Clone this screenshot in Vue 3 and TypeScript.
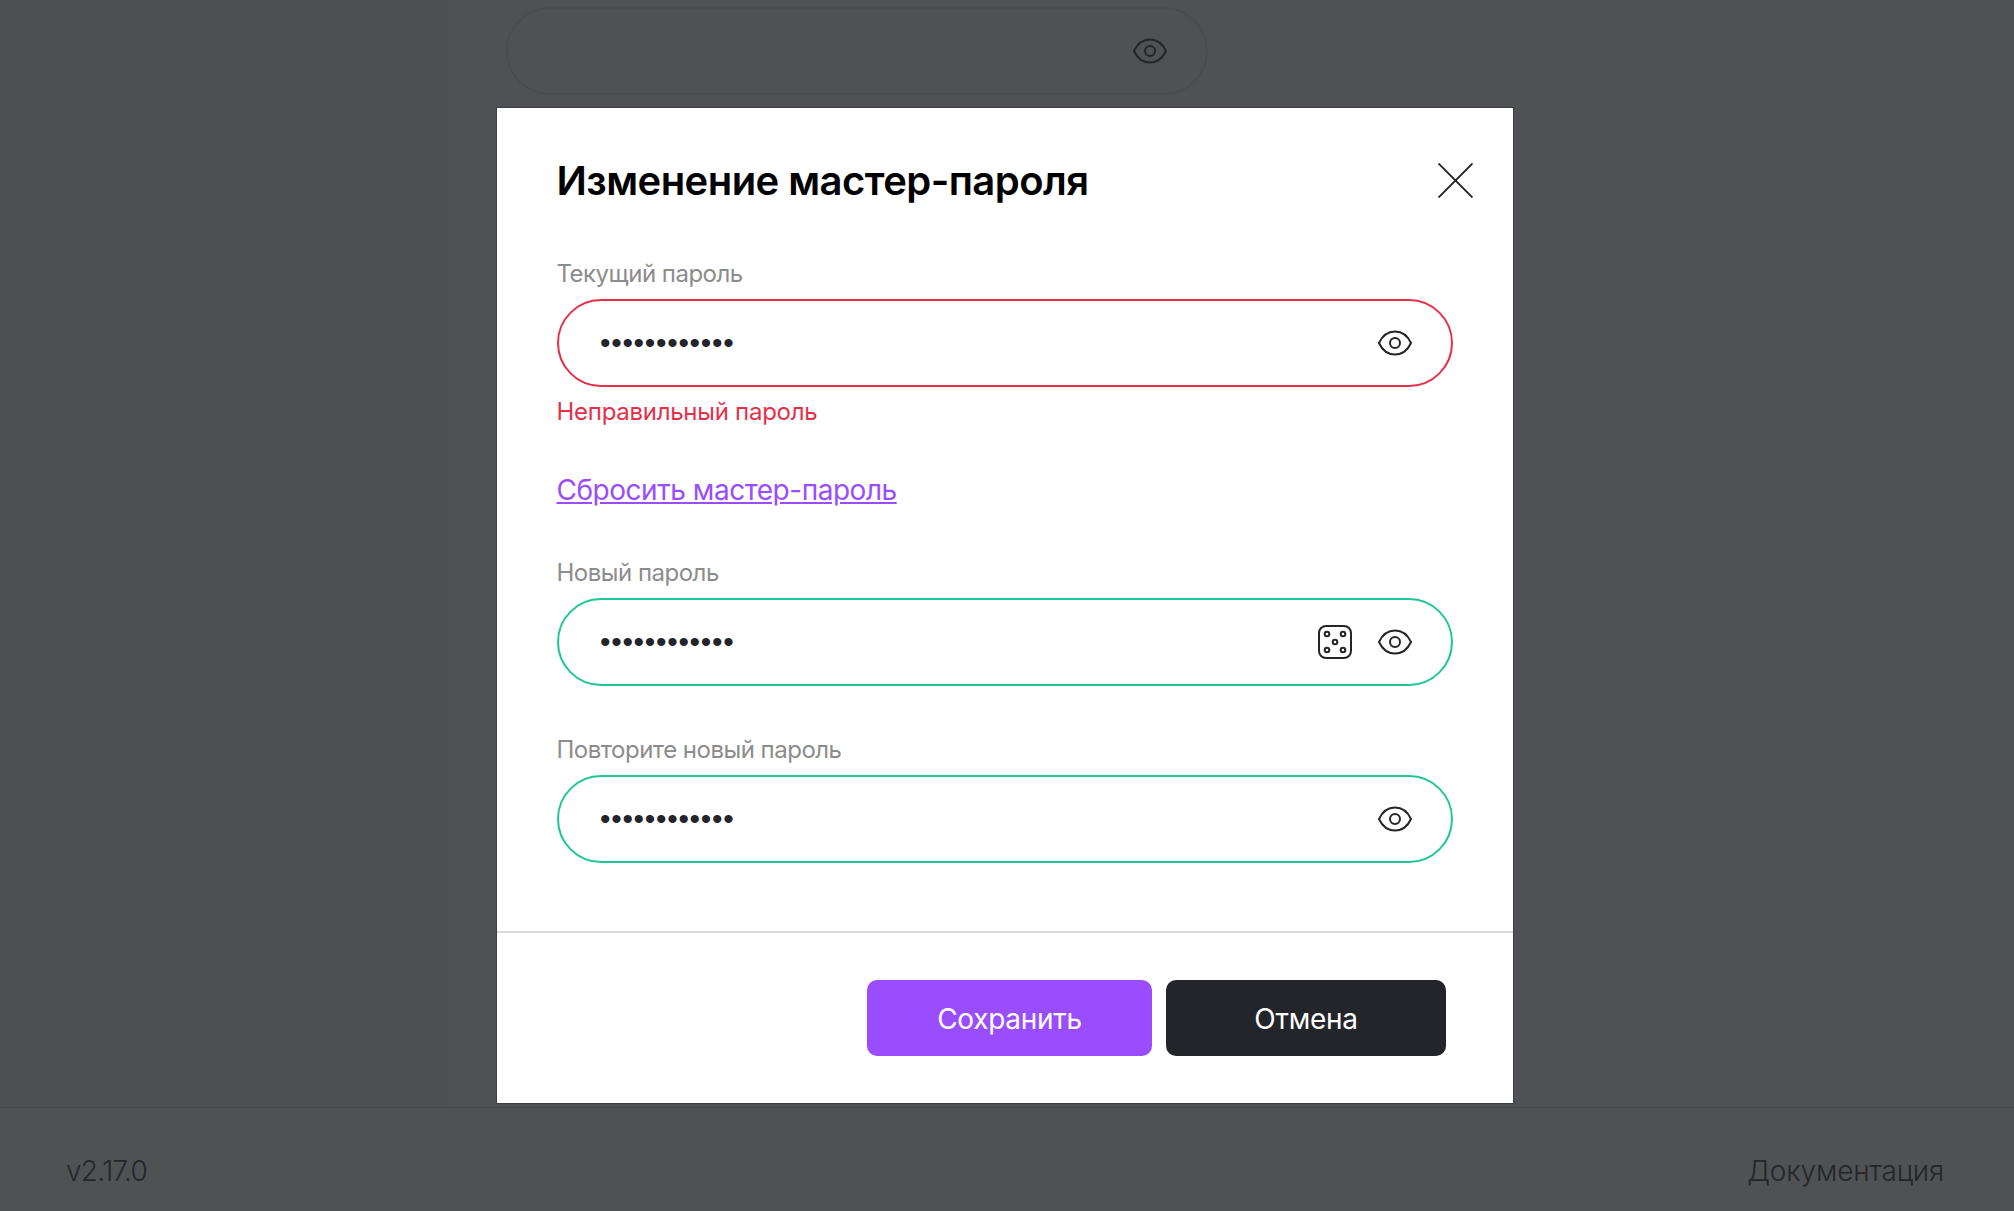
<script setup lang="ts">
const eye = 'M2 18c3.500-7.500 9-11.500 16-11.500s12.500 4 16 11.500c-3.500 7.500-9 11.500-16 11.500s-12.500-4-16-11.500Z'
</script>

<template>
  <div class="page">
    <div class="main">
      <aside class="side"></aside>
      <section class="content">
        <div class="bg-input">
          <svg class="ico" viewBox="0 0 36 36"><path :d="eye" /><circle cx="18" cy="18" r="5" /></svg>
        </div>
      </section>
    </div>
    <footer class="foot">
      <span class="ver">v2.17.0</span>
      <span>Документация</span>
    </footer>

    <div class="overlay">
      <div class="modal">
        <div class="body">
          <div class="head">
            <h2>Изменение мастер-пароля</h2>
            <svg class="close" viewBox="0 0 36 36"><path d="M0.500 0.500 35.500 35.500M35.500 0.500 0.500 35.500" /></svg>
          </div>

          <label class="label first">Текущий пароль</label>
          <div class="field err">
            <input type="password" value="123456789012" readonly />
            <svg class="ico" viewBox="0 0 36 36"><path :d="eye" /><circle cx="18" cy="18" r="5" /></svg>
          </div>
          <div class="error">Неправильный пароль</div>
          <a class="link" href="#">Сбросить мастер-пароль</a>

          <label class="label">Новый пароль</label>
          <div class="field ok">
            <input type="password" value="123456789012" readonly />
            <svg class="ico" viewBox="0 0 36 36">
              <rect x="2" y="2" width="32" height="32" rx="7" />
              <circle cx="10" cy="10" r="2.300" /><circle cx="26" cy="10" r="2.300" />
              <circle cx="18" cy="18" r="2.300" />
              <circle cx="10" cy="26" r="2.300" /><circle cx="26" cy="26" r="2.300" />
            </svg>
            <svg class="ico" viewBox="0 0 36 36"><path :d="eye" /><circle cx="18" cy="18" r="5" /></svg>
          </div>

          <label class="label second">Повторите новый пароль</label>
          <div class="field ok">
            <input type="password" value="123456789012" readonly />
            <svg class="ico" viewBox="0 0 36 36"><path :d="eye" /><circle cx="18" cy="18" r="5" /></svg>
          </div>
        </div>
        <div class="actions">
          <button class="btn save">Сохранить</button>
          <button class="btn cancel">Отмена</button>
        </div>
      </div>
    </div>
  </div>
</template>

<style>
html, body { margin: 0; background: #fff; overflow: hidden; }
</style>

<style scoped>
.page {
  width: 2014px;
  height: 1211px;
  display: flex;
  flex-direction: column;
  font-family: Inter, "Noto Sans", sans-serif;
  color: #24252a;
  background: #fff;
}
.main { flex: 1; display: flex; min-height: 0; }
.side { width: 446px; background: #f7f7f7; }
.content { flex: 1; padding: 7px 60px; }
.bg-input {
  box-sizing: border-box;
  width: 702px;
  height: 88px;
  border: 2px solid #e4e4e4;
  border-radius: 44px;
  display: flex;
  align-items: center;
  justify-content: flex-end;
  padding-right: 38px;
}
.foot {
  box-sizing: border-box;
  height: 104px;
  border-top: 1px solid #e2e2e2;
  display: flex;
  align-items: center;
  justify-content: space-between;
  padding: 22px 70px 0 66px;
  font-size: 28px;
  font-weight: 300;
  letter-spacing: -0.200px;
}
.ver { letter-spacing: -0.700px; }
.ico { width: 36px; height: 36px; fill: none; stroke: #24252a; stroke-width: 2; flex: none; }
.overlay {
  position: fixed;
  inset: 0;
  background: rgba(36, 37, 42, 0.8);
  display: flex;
  align-items: center;
  justify-content: center;
  padding-right: 4px;
}
.modal {
  box-sizing: border-box;
  width: 1018px;
  height: 997px;
  background: #fff;
  border: 1px solid #3e3f43;
  display: flex;
  flex-direction: column;
}
.body { flex: 1; padding: 50px 60px 0 59.500px; border-bottom: 2px solid #d9d9d9; }
.head { display: flex; align-items: center; justify-content: space-between; height: 46px; margin-right: -19.500px; }
h2 { margin: -2px 0 0; font-size: 40px; font-weight: 600; color: #000; letter-spacing: -0.550px; }
.close { width: 35px; height: 35px; margin-bottom: 2px; fill: none; stroke: #24252a; stroke-width: 2; }
.label { display: block; font-size: 24px; font-weight: 400; color: #8c8c8c; line-height: 32px; margin: 0 0 9px; letter-spacing: -0.500px; }
.label.first { margin-top: 54px; }
.label.second { margin-top: 48px; }
.field {
  box-sizing: border-box;
  width: 896.500px;
  height: 88px;
  border-radius: 44px;
  border: 2px solid;
  display: flex;
  align-items: center;
  gap: 24px;
  padding: 0 38px 0 41.500px;
}
.err { border-color: #e5304a; }
.ok { border-color: #1fc796; }
input {
  flex: 1;
  min-width: 0;
  border: 0;
  outline: 0;
  padding: 0;
  background: none;
  font-family: "Liberation Sans", sans-serif;
  font-size: 30px;
  letter-spacing: 0.700px;
  color: #24252a;
}
.error { color: #e5304a; font-size: 24px; line-height: 32px; margin-top: 9px; letter-spacing: -0.270px; }
.link { display: block; color: #9a4dff; font-size: 28px; line-height: 36px; margin: 44px 0 49px; text-decoration: underline; letter-spacing: -0.470px; }
.actions { height: 170px; display: flex; align-items: center; justify-content: flex-end; gap: 14px; padding-right: 67px; box-sizing: border-box; }
.btn {
  height: 76px;
  border: 0;
  border-radius: 10px;
  color: #fff;
  font-family: Inter, "Noto Sans", sans-serif;
  font-size: 28px;
  font-weight: 400;
  letter-spacing: -0.300px;
  padding: 2px 0 0;
}
.save { width: 285px; background: #9a4dff; }
.cancel { width: 280px; background: #24252a; }
</style>
